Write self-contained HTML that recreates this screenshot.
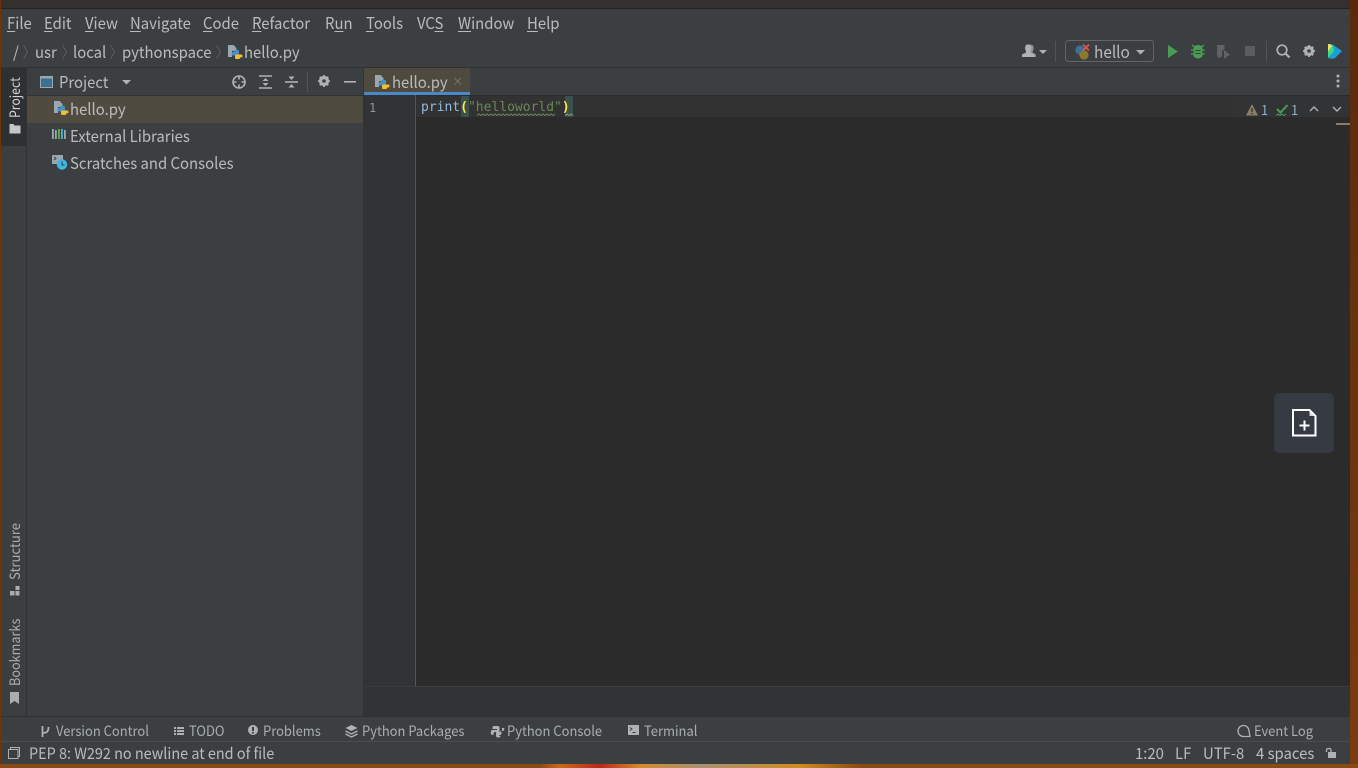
<!DOCTYPE html>
<html><head><meta charset="utf-8"><style>
html,body{margin:0;padding:0;width:1358px;height:768px;overflow:hidden;background:#6e3208}
*{box-sizing:border-box}
.a{position:absolute}
.t{position:absolute;white-space:nowrap;font-family:"Noto Sans CJK SC","Liberation Sans",sans-serif;font-size:16px;line-height:22px;color:#bbbbbb;transform:scaleX(.93);transform-origin:0 0}
.s{font-size:14px;line-height:20px;color:#a9aeb0;transform:scaleX(.925)}
.r{transform:scaleX(.96)}
.u{text-decoration:underline;text-underline-offset:2px;text-decoration-thickness:1px}
svg{position:absolute;overflow:visible}
.m{position:absolute;white-space:pre;font-family:"DejaVu Sans Mono","Liberation Mono",monospace;font-size:13px;line-height:18px}
.v{position:absolute;white-space:nowrap;font-family:"Noto Sans CJK SC","Liberation Sans",sans-serif;font-size:14px;line-height:18px;color:#a9aeb0;transform-origin:0 0}
</style></head><body>
<div class="a" style="left:0;top:0;width:1358px;height:768px;background:#743409"></div>
<div class="a" style="left:1350px;top:0;width:8px;height:768px;background:linear-gradient(#5a2a0a,#7a3c10)"></div>
<div class="a" style="left:0;top:764px;width:1358px;height:4px;background:linear-gradient(90deg,#8a4a14 0,#8a4a14 540px,#c96a1a 560px,#b8291a 600px,#d48a2c 640px,#a89070 700px,#d08a20 800px,#8a4a14 860px,#8a4a14 1358px)"></div>
<div class="a" style="left:1px;top:0;width:1349px;height:9px;background:#34302e"></div>
<div class="a" style="left:1px;top:8px;width:1349px;height:1px;background:#232323"></div>
<div class="a" style="left:1px;top:9px;width:1349px;height:755px;background:#3c3f41"></div>

<!-- menu -->
<div class="t" style="left:7px;top:11px"><span class="u">F</span>ile</div>
<div class="t" style="left:44px;top:11px"><span class="u">E</span>dit</div>
<div class="t" style="left:85px;top:11px"><span class="u">V</span>iew</div>
<div class="t" style="left:130px;top:11px"><span class="u">N</span>avigate</div>
<div class="t" style="left:203px;top:11px"><span class="u">C</span>ode</div>
<div class="t" style="left:252px;top:11px"><span class="u">R</span>efactor</div>
<div class="t" style="left:325px;top:11px">R<span class="u">u</span>n</div>
<div class="t" style="left:366px;top:11px"><span class="u">T</span>ools</div>
<div class="t" style="left:417px;top:11px">VC<span class="u">S</span></div>
<div class="t" style="left:458px;top:11px"><span class="u">W</span>indow</div>
<div class="t" style="left:527px;top:11px"><span class="u">H</span>elp</div>

<!-- breadcrumb -->
<div class="t" style="left:13px;top:40px">/</div>
<div class="t" style="left:35px;top:40px">usr</div>
<div class="t" style="left:73px;top:40px">local</div>
<div class="t" style="left:122px;top:40px">pythonspace</div>
<div class="t" style="left:244px;top:40px">hello.py</div>
<svg style="left:0;top:0" width="300" height="68"><g fill="none" stroke="#5a5d5f" stroke-width="1"><path d="M23.500 45l4 7-4 7M62.500 45l4 7-4 7M110.500 45l4 7-4 7M216.500 45l4 7-4 7"/></g>
<g transform="translate(228,44)"><path d="M0 1h5.500l3 3v3H4v6H0z" fill="#9aa7b0"/><rect x="6" y="6" width="5" height="3" rx="1" fill="#4a8fc7"/><rect x="3.500" y="8" width="7.500" height="3.500" rx="1.200" fill="#4a8fc7"/><rect x="7" y="10.500" width="7.500" height="3" rx="1.200" fill="#f0c030"/><rect x="7" y="12.500" width="5" height="2.500" rx="1" fill="#f0c030"/></g></svg>
<div class="a" style="left:1px;top:67px;width:1349px;height:1px;background:#323232"></div>

<!-- toolbar right -->
<svg style="left:0;top:0" width="1358" height="68">
<path d="M1029 45c2-1 4 0 4.500 1.500s.2 3.500-.8 4.500v1.500l3.300 2V57h-4v-2l-3-1.800z" fill="#8c8f91"/>
<path d="M1022 57v-2.500l4-2v-1.500c-1-1-1.300-4-.3-5.500s4-1.500 5 0 .7 4.500-.3 5.500v1.500l4 2v2.500z" fill="#afb1b3"/>
<path d="M1039 50h8l-4 4z" fill="#afb1b3"/>
<rect x="1055" y="41" width="1" height="21" fill="#515354"/>
<rect x="1065.500" y="40.500" width="88" height="21" rx="3" fill="none" stroke="#646464"/>
<circle cx="1080" cy="50" r="4.600" fill="#3f6f96"/><circle cx="1084" cy="55" r="4.600" fill="#8a7a2a"/>
<path d="M1083 44.500l6 6M1089 44.500l-6 6" stroke="#e05555" stroke-width="1.700"/>
<path d="M1136 50h9l-4.500 4.500z" fill="#afb1b3"/>
<path d="M1168 45v13l10-6.500z" fill="#499c54"/>
<path d="M1198 45c-3 0-4.500 2-4.500 3v7c0 2 2 3.500 4.500 3.500s4.500-1.500 4.500-3.500v-7c0-1-1.500-3-4.500-3z" fill="#499c54"/>
<path d="M1192 45l3 2.500M1204 45l-3 2.500M1191 50h3M1205 50h-3M1191 54h3M1205 54h-3" stroke="#499c54" stroke-width="1.300"/>
<path d="M1195.500 50.500h5M1195.500 53.500h5" stroke="#3c3f41" stroke-width="1"/>
<path d="M1217 45h7.500v4l-2.500 2v5l-2 2c-2 0-3-2-3-3z" fill="#5f6365"/><path d="M1224 50v9l6-4.500z" fill="#5f6365"/>
<rect x="1245" y="46" width="10" height="10" fill="#5a5d5f"/>
<rect x="1266" y="41" width="1" height="21" fill="#515354"/>
<circle cx="1282" cy="50" r="4.800" fill="none" stroke="#afb1b3" stroke-width="1.700"/><path d="M1285.500 53.500l4 4" stroke="#afb1b3" stroke-width="2"/>
<circle cx="1309" cy="51" r="3.700" fill="none" stroke="#afb1b3" stroke-width="2.800"/><path d="M1309 45v12M1303 51h12M1304.800 46.800l8.400 8.400M1313.200 46.800l-8.400 8.400" stroke="#afb1b3" stroke-width="1.800"/><circle cx="1309" cy="51" r="1.800" fill="#3c3f41"/>
<path d="M1328 44c2 0 4 0 6 1.500l8 5.500-7 7c-2 1-5 1-7-.5z" fill="#1f9fd8"/><path d="M1328 44c2 0 3.500.5 5 2l1 5-6 7z" fill="#3ddc84"/><path d="M1328 44c2 0 3 .5 4 1.500l-2 3.500-2 2.500z" fill="#e8e060"/>
</svg>
<div class="t" style="left:1094px;top:40px;font-size:16.500px">hello</div>

<!-- left stripe -->
<div class="a" style="left:1px;top:68px;width:26px;height:78px;background:#2e3133"></div>
<div class="a" style="left:26px;top:68px;width:1px;height:648px;background:#323232"></div>
<div class="v" style="left:6px;top:118px;color:#d0d2d3;transform:rotate(-90deg) scaleX(.875)">Project</div>
<svg style="left:0;top:0" width="30" height="720">
<path d="M9.500 124h4l1 1.500h6v8h-11z" fill="#c4c6c7"/>
<rect x="10" y="591" width="4.500" height="4.500" fill="#a9aeb0"/><rect x="15.500" y="591" width="4" height="4.500" fill="#a9aeb0"/><rect x="15.500" y="586" width="4" height="4" fill="#a9aeb0"/>
<path d="M10 692h9v12l-4.500-3-4.500 3z" fill="#a9aeb0"/>
</svg>
<div class="v" style="left:6px;top:580px;transform:rotate(-90deg) scaleX(.935)">Structure</div>
<div class="v" style="left:6px;top:686px;transform:rotate(-90deg) scaleX(.905)">Bookmarks</div>

<!-- project panel -->
<div class="a" style="left:27px;top:95px;width:336px;height:1px;background:#323232"></div>
<div class="a" style="left:27px;top:96px;width:336px;height:27px;background:#4f4b41"></div>
<div class="a" style="left:363px;top:68px;width:1px;height:648px;background:#323232"></div>
<div class="t" style="left:59px;top:70px">Project</div>
<div class="t" style="left:70px;top:97px">hello.py</div>
<div class="t" style="left:70px;top:124px">External Libraries</div>
<div class="t" style="left:70px;top:151px">Scratches and Consoles</div>
<svg style="left:0;top:0" width="364" height="180">
<rect x="40.500" y="76.500" width="12" height="11" fill="#3d6f8e" stroke="#9aa7b0"/><rect x="40" y="76" width="13" height="2.500" fill="#9aa7b0"/>
<path d="M122 80h9l-4.500 4.500z" fill="#afb1b3"/>
<circle cx="239" cy="82" r="6" fill="none" stroke="#afb1b3" stroke-width="1.600"/><path d="M239 75.500v4M239 84.500v4M232.500 82h4M241.500 82h4" stroke="#afb1b3" stroke-width="1.600"/>
<path d="M259 76h13M259 88h13" stroke="#afb1b3" stroke-width="1.600"/><path d="M265.500 78l3 3h-6zM265.500 86l3-3h-6z" fill="#afb1b3"/>
<path d="M285 82h13" stroke="#afb1b3" stroke-width="1.600"/><path d="M291.500 80l3-3.500h-6zM291.500 84l3 3.500h-6z" fill="#afb1b3"/>
<rect x="307" y="72" width="1" height="20" fill="#515354"/>
<circle cx="324" cy="81" r="3.700" fill="none" stroke="#afb1b3" stroke-width="2.800"/><path d="M324 75v12M318 81h12M319.800 76.800l8.400 8.400M328.200 76.800l-8.400 8.400" stroke="#afb1b3" stroke-width="1.800"/><circle cx="324" cy="81" r="1.800" fill="#3c3f41"/>
<rect x="344" y="81" width="12" height="1.600" fill="#afb1b3"/>
<g transform="translate(54,100)"><path d="M0 1h5.500l3 3v3H4v6H0z" fill="#9aa7b0"/><rect x="6" y="6" width="5" height="3" rx="1" fill="#4a8fc7"/><rect x="3.500" y="8" width="7.500" height="3.500" rx="1.200" fill="#4a8fc7"/><rect x="7" y="10.500" width="7.500" height="3" rx="1.200" fill="#f0c030"/><rect x="7" y="12.500" width="5" height="2.500" rx="1" fill="#f0c030"/></g>
<rect x="52" y="129" width="1.800" height="10" fill="#9aa7b0"/><rect x="55" y="130" width="1.800" height="9" fill="#9aa7b0"/><rect x="58" y="129" width="1.800" height="10" fill="#62b543"/><rect x="61" y="129" width="1.800" height="10" fill="#40b6e0"/><rect x="64" y="130" width="1.800" height="9" fill="#9aa7b0"/>
<rect x="52" y="155" width="11" height="9" fill="#9aa7b0"/><path d="M54 157l2 1.500-2 1.500" fill="none" stroke="#3c3f41"/>
<circle cx="62" cy="164.500" r="5.200" fill="#40b6e0"/><path d="M62 161.500v3.500h2.500" fill="none" stroke="#2b3a44" stroke-width="1"/>
</svg>

<!-- tabs -->
<div class="a" style="left:364px;top:68px;width:106px;height:24px;background:#4e4a40"></div>
<div class="a" style="left:364px;top:92px;width:106px;height:3px;background:#4a88c7"></div>
<div class="t" style="left:392px;top:70px">hello.py</div>
<svg style="left:0;top:0" width="1358" height="100">
<g transform="translate(375,74)"><path d="M0 1h5.500l3 3v3H4v6H0z" fill="#9aa7b0"/><rect x="6" y="6" width="5" height="3" rx="1" fill="#4a8fc7"/><rect x="3.500" y="8" width="7.500" height="3.500" rx="1.200" fill="#4a8fc7"/><rect x="7" y="10.500" width="7.500" height="3" rx="1.200" fill="#f0c030"/><rect x="7" y="12.500" width="5" height="2.500" rx="1" fill="#f0c030"/></g>
<path d="M454.500 78l6.500 6.500M461 78l-6.500 6.500" stroke="#6e7072" stroke-width="1"/>
<circle cx="1338" cy="76" r="1.500" fill="#afb1b3"/><circle cx="1338" cy="81" r="1.500" fill="#afb1b3"/><circle cx="1338" cy="86" r="1.500" fill="#afb1b3"/>
</svg>

<!-- editor -->
<div class="a" style="left:364px;top:95px;width:986px;height:591px;background:#2b2b2b"></div>
<div class="a" style="left:364px;top:95px;width:51px;height:591px;background:#313335"></div>
<div class="a" style="left:415px;top:95px;width:1px;height:591px;background:#555555"></div>
<div class="a" style="left:416px;top:96px;width:934px;height:21px;background:#323232"></div>
<div class="a" style="left:364px;top:686px;width:986px;height:30px;background:#313335;border-top:1px solid #3a3c3e"></div>
<div class="a" style="left:461px;top:96px;width:8px;height:21px;background:#3b514d"></div>
<div class="a" style="left:565px;top:96px;width:8px;height:21px;background:#3b514d"></div>
<div class="m" style="left:369px;top:99px;color:#8a9499;font-size:12px">1</div>
<div class="m" style="left:421px;top:99px;color:#a9b7c6"><span style="color:#8fb8de">print</span><b style="color:#ffe84a">(</b><span style="color:#6a8759">"helloworld"</span><b style="color:#ffe84a">)</b></div>
<svg style="left:0;top:0" width="1358" height="130">
<path d="M477 115.500l2-1.500 2 1.500 2-1.500 2 1.500 2-1.500 2 1.500 2-1.500 2 1.500 2-1.500 2 1.500 2-1.500 2 1.500 2-1.500 2 1.500 2-1.500 2 1.500 2-1.500 2 1.500 2-1.500 2 1.500 2-1.500 2 1.500 2-1.500 2 1.500 2-1.500 2 1.500 2-1.500 2 1.500 2-1.500 2 1.500 2-1.500 2 1.500 2-1.500 2 1.500 2-1.500 2 1.500 2-1.500 2 1.500 2-1.500" fill="none" stroke="#6d8a5c" stroke-width="1"/>
<path d="M565 115.500l2-1.500 2 1.500 2-1.500 2 1.500" fill="none" stroke="#7d9a6c" stroke-width="1"/>
<path d="M1237 117v-18a2 2 0 0 1 2-2h107a2 2 0 0 1 2 2v18z" fill="#313335"/>
<path d="M1252 104l6 11.500h-12z" fill="#8a7f60"/><rect x="1251.300" y="108" width="1.400" height="4" fill="#313335"/><rect x="1251.300" y="113" width="1.400" height="1.400" fill="#313335"/>
<path d="M1277 109l3.500 3.500 7-7.500" fill="none" stroke="#499c54" stroke-width="2"/>
<path d="M1276 115.500l2-1.500 2 1.500 2-1.500 2 1.500 2-1.500" fill="none" stroke="#499c54"/>
<path d="M1310 111l4-4 4 4" fill="none" stroke="#afb1b3" stroke-width="1.400"/>
<path d="M1333 107l4 4 4-4" fill="none" stroke="#afb1b3" stroke-width="1.400"/>
<rect x="1336" y="123" width="14" height="2" fill="#8a7f60"/>
</svg>
<div class="t s" style="left:1261px;top:100px;color:#8fb0cc">1</div>
<div class="t s" style="left:1291px;top:100px;color:#8fb0cc">1</div>

<!-- floating -->
<div class="a" style="left:1274px;top:393px;width:60px;height:60px;border-radius:5px;background:#353a43"></div>
<svg style="left:0;top:0" width="1358" height="460">
<path d="M1293 410h16.500l6 6v19.500h-22.500z" fill="none" stroke="#ffffff" stroke-width="2"/>
<path d="M1309.500 410v6h6z" fill="#ffffff" opacity=".8"/>
<path d="M1299.500 425.500h10M1304.500 420.500v10" stroke="#ffffff" stroke-width="2"/>
</svg>

<!-- bottom tool bar -->
<div class="a" style="left:1px;top:716px;width:1349px;height:1px;background:#323232"></div>
<div class="a" style="left:1px;top:741px;width:1349px;height:1px;background:#4a4d4f"></div>
<div class="t s" style="left:56px;top:721px">Version Control</div>
<div class="t s" style="left:189px;top:721px">TODO</div>
<div class="t s" style="left:263px;top:721px">Problems</div>
<div class="t s" style="left:362px;top:721px">Python Packages</div>
<div class="t s" style="left:507px;top:721px">Python Console</div>
<div class="t s" style="left:644px;top:721px">Terminal</div>
<div class="t s" style="left:1254px;top:721px">Event Log</div>
<svg style="left:0;top:0" width="1358" height="768">
<path d="M42.500 726v11M42.500 733c4 0 6-1 6-6" fill="none" stroke="#afb1b3" stroke-width="1.800"/>
<path d="M174 727h2v2h-2zM174 730h2v2h-2zM174 733h2v2h-2z" fill="#afb1b3"/><path d="M177 727h7v2h-7zM177 730h7v2h-7zM177 733h7v2h-7z" fill="#afb1b3"/>
<circle cx="253" cy="730" r="5" fill="#afb1b3"/><rect x="252" y="727" width="2" height="4" fill="#3c3f41"/><rect x="252" y="732" width="2" height="1.500" fill="#3c3f41"/>
<path d="M351.500 725l6 3-6 3-6-3z" fill="#afb1b3"/><path d="M345.500 731l6 3 6-3M345.500 734l6 3 6-3" fill="none" stroke="#afb1b3" stroke-width="1.400"/>
<path d="M496 726h-2c-1 0-1.500 1-1.500 2v1h4.500v1h-4.500c-1 0-1.800 1-1.800 2.500s.8 2.500 1.800 2.500h1v-1.500c0-1 .8-1.500 1.500-1.500h3c1 0 1.500-.8 1.500-1.500v-3c0-1-1-1.500-2-1.500z" fill="#afb1b3"/>
<path d="M498 735h2c1 0 1.500-1 1.500-2v-1H498v-1h4.500c1 0 1.800-1 1.800-2.500v-.5h-2.300v2c0 1-.8 1.500-1.500 1.500h-3c-1 0-1.500.8-1.500 1.500v3c0 1 1 1.500 2 1.500h1c1 0 1.500-.8 1.500-1.500z" fill="#afb1b3"/>
<rect x="628" y="725" width="11" height="10" fill="#afb1b3"/><path d="M630 727.500l2 1.500-2 1.500M632.500 732.500h3" fill="none" stroke="#3c3f41" stroke-width="1"/>
<path d="M1250 736.500h-6.500a5.500 5.500 0 1 1 5.500-5.500z" fill="none" stroke="#afb1b3" stroke-width="1.300"/>
<path d="M8.500 749.500h9.500v9h-9.500z" fill="none" stroke="#afb1b3" stroke-width="1"/><path d="M10.500 749.500v-2h9v9h-1.500" fill="none" stroke="#afb1b3" stroke-width="1"/>
<rect x="1328" y="752" width="8" height="6" fill="#afb1b3"/><path d="M1326.500 752v-2c0-2 4.500-2 4.500 0v2" fill="none" stroke="#afb1b3" stroke-width="1.300"/>
</svg>

<!-- status -->
<div class="t" style="left:29px;top:742px;font-size:15.500px">PEP 8: W292 no newline at end of file</div>
<div class="t r" style="left:1135px;top:742px;font-size:15.500px">1:20</div>
<div class="t r" style="left:1175px;top:742px;font-size:15.500px">LF</div>
<div class="t r" style="left:1203px;top:742px;font-size:15.500px">UTF-8</div>
<div class="t r" style="left:1256px;top:742px;font-size:15.500px">4 spaces</div>
</body></html>
